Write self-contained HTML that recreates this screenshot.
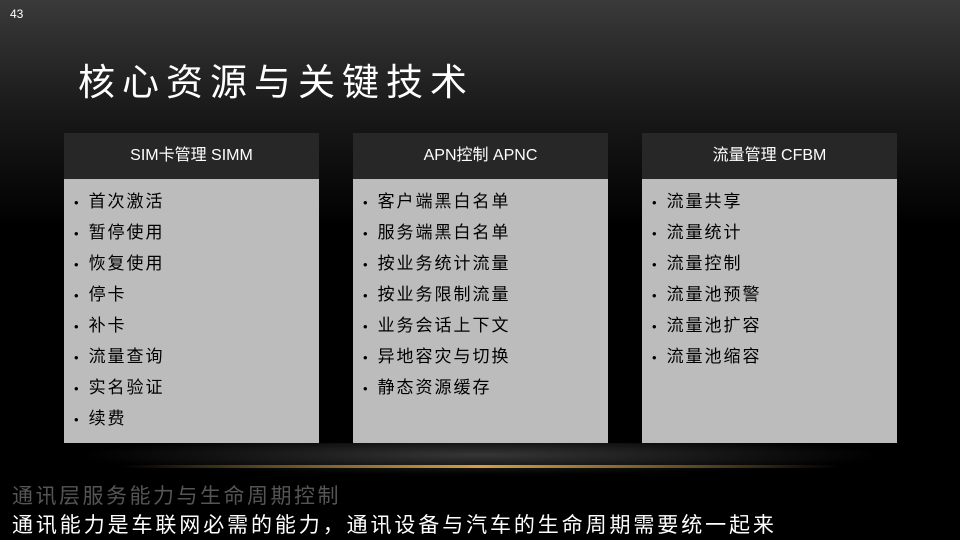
<!DOCTYPE html>
<html><head><meta charset="utf-8"><style>
body{margin:0;width:960px;height:540px;overflow:hidden;position:relative;
background:linear-gradient(180deg,#3a3a3a 0%,#1a1a1a 20%,#000 42%,#000 100%);
font-family:"Liberation Sans","Noto Sans CJK SC",sans-serif;}
.num{position:absolute;left:10px;top:7px;color:#fff;font-size:12px;}
.title{position:absolute;left:78px;top:58px;color:#fff;font-size:37px;letter-spacing:7px;font-family:"Liberation Sans","WenQuanYi Zen Hei",sans-serif;line-height:50px;}
.box{position:absolute;top:133px;width:255px;height:310px;background:#bcbcbc;}
.hd{height:46px;background:#272727;color:#fff;font-size:16px;text-align:center;line-height:46px;}
ul{margin:0;padding:7px 0 0 10px;list-style:none;}
li{display:block;height:31px;overflow:hidden;font-size:17px;line-height:31px;letter-spacing:2px;color:#000;font-family:"WenQuanYi Zen Hei",sans-serif;}
li:before{content:"•";margin-right:8px;font-size:13px;}
.glow{position:absolute;left:80px;top:443px;width:800px;height:40px;
background:radial-gradient(ellipse 50% 50% at 50% 30%,rgba(90,90,90,.6),rgba(0,0,0,0));}
.line{position:absolute;left:120px;top:465px;width:720px;height:3px;
background:linear-gradient(90deg,rgba(120,90,30,0),#d4a040 50%,rgba(120,90,30,0));}
.t1{position:absolute;left:12px;top:480px;color:#555;font-size:21px;letter-spacing:2.5px;font-family:"WenQuanYi Zen Hei",sans-serif;}
.t2{position:absolute;left:12px;top:509px;color:#fff;font-size:21px;letter-spacing:2.9px;font-family:"WenQuanYi Zen Hei",sans-serif;}
</style></head><body>
<div class="num">43</div>
<div class="title">核心资源与关键技术</div>
<div class="box" style="left:64px"><div class="hd">SIM卡管理 SIMM</div><ul>
<li>首次激活</li><li>暂停使用</li><li>恢复使用</li><li>停卡</li><li>补卡</li><li>流量查询</li><li>实名验证</li><li>续费</li></ul></div>
<div class="box" style="left:353px"><div class="hd">APN控制 APNC</div><ul>
<li>客户端黑白名单</li><li>服务端黑白名单</li><li>按业务统计流量</li><li>按业务限制流量</li><li>业务会话上下文</li><li>异地容灾与切换</li><li>静态资源缓存</li></ul></div>
<div class="box" style="left:642px"><div class="hd">流量管理 CFBM</div><ul>
<li>流量共享</li><li>流量统计</li><li>流量控制</li><li>流量池预警</li><li>流量池扩容</li><li>流量池缩容</li></ul></div>
<div class="glow"></div><div class="line"></div>
<div class="t1">通讯层服务能力与生命周期控制</div>
<div class="t2">通讯能力是车联网必需的能力，通讯设备与汽车的生命周期需要统一起来</div>
</body></html>
